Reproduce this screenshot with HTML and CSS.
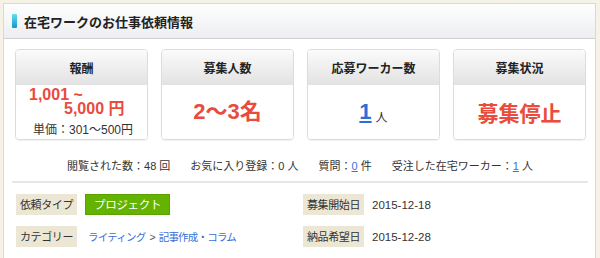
FILE: index.html
```html
<!DOCTYPE html>
<html lang="ja">
<head>
<meta charset="utf-8">
<link rel="stylesheet" href="styles.css">
</head>
<body>
<div class="panel">
  <div class="panel-header">
    <span class="bar-icon"></span>
    <h1 class="panel-title">在宅ワークのお仕事依頼情報</h1>
  </div>
  <div class="cards">
    <div class="card">
      <div class="card-head">報酬</div>
      <div class="card-body">
        <div class="reward">
          <span class="reward-l1">1,001 ~</span>
          <span class="reward-l2">5,000 円</span>
          <span class="unit">単価：301〜500円</span>
        </div>
      </div>
    </div>
    <div class="card">
      <div class="card-head">募集人数</div>
      <div class="card-body"><span class="big red">2〜3名</span></div>
    </div>
    <div class="card">
      <div class="card-head">応募ワーカー数</div>
      <div class="card-body"><a class="big blue" href="#">1</a><span class="small">人</span></div>
    </div>
    <div class="card">
      <div class="card-head">募集状況</div>
      <div class="card-body"><span class="big red status">募集停止</span></div>
    </div>
  </div>
  <div class="stats">
    <span>閲覧された数：48 回</span>
    <span>お気に入り登録：0 人</span>
    <span>質問：<a href="#">0</a> 件</span>
    <span>受注した在宅ワーカー：<a href="#">1</a> 人</span>
  </div>
  <div class="details">
    <div class="row"><span class="label">依頼タイプ</span><span class="tag">プロジェクト</span></div>
    <div class="row"><span class="label">募集開始日</span><span class="value">2015-12-18</span></div>
    <div class="row"><span class="label">カテゴリー</span><span class="cats"><a href="#">ライティング</a><span class="sep">&gt;</span><a href="#">記事作成・コラム</a></span></div>
    <div class="row"><span class="label">納品希望日</span><span class="value">2015-12-28</span></div>
  </div>
</div>
</body>
</html>
```

FILE: styles.css
```css
* { box-sizing: border-box; }
html, body { margin: 0; padding: 0; }
body {
  background: #f6f2e6;
  font-family: "Liberation Sans", "Noto Sans CJK JP", sans-serif;
  color: #333;
  width: 600px;
  height: 258px;
  overflow: hidden;
}
a { color: #3a6fd8; }
.panel {
  margin: 3px 4px 0 3px;
  border: 1px solid #d9d9d9;
  border-bottom: none;
  background: #fff;
  height: 255px;
  overflow: hidden;
}
.panel-header {
  height: 35px;
  border-bottom: 1px solid #cfcfcf;
  background: linear-gradient(#fefefe, #eceef1);
  display: flex;
  align-items: center;
  padding-left: 8px;
}
.bar-icon {
  width: 5px;
  height: 14px;
  border-radius: 1px;
  background: linear-gradient(#5fe0f0, #1596c8);
  margin-right: 7px;
}
.panel-title {
  margin: 0;
  font-family: "Noto Sans CJK JP", sans-serif;
  font-size: 13px;
  font-weight: bold;
  color: #222;
}
.cards {
  display: grid;
  grid-template-columns: repeat(4, 1fr);
  gap: 13px;
  padding: 10px 9px 0 11px;
}
.card {
  border: 1px solid #dcdcdc;
  border-radius: 4px;
  height: 91px;
  overflow: hidden;
  box-shadow: 0 1px 1px rgba(0,0,0,0.06);
  display: flex;
  flex-direction: column;
}
.card-head {
  height: 35px;
  background: linear-gradient(#fbfbfb, #e2e2e2);
  display: flex;
  align-items: center;
  justify-content: center;
  font-family: "Noto Sans CJK JP", sans-serif;
  font-size: 12px;
  font-weight: bold;
  color: #222;
}
.card-body {
  flex: 1;
  display: flex;
  align-items: center;
  justify-content: center;
  background: #fff;
}
.reward {
  display: flex;
  flex-direction: column;
  width: 100%;
}
.reward-l1, .reward-l2 {
  color: #e94b3c;
  font-weight: bold;
  font-size: 16px;
  line-height: 13px;
  white-space: nowrap;
}
.reward-l1 { padding-left: 13px; }
.reward-l2 { padding-left: 48px; margin-top: 1px; }
.unit {
  text-align: center;
  font-size: 12px;
  margin-top: 8px;
  line-height: 14px;
  color: #333;
  padding-left: 3px;
}
.big {
  font-size: 22px;
  font-weight: bold;
  line-height: 28px;
}
.red { color: #e94b3c; }
.blue { color: #2b6ed8; font-size: 22px; }
.status {
  font-family: "Noto Sans CJK JP", sans-serif;
  font-size: 21px;
}
.small {
  font-size: 12px;
  color: #333;
  margin-left: 4px;
  align-self: center;
  margin-top: 8px;
}
.stats {
  display: flex;
  justify-content: center;
  gap: 20px;
  font-size: 11px;
  line-height: 18px;
  margin: 17px 7px 0 8px;
  padding-bottom: 6px;
  border-bottom: 2px solid #e6e6e6;
  color: #333;
}
.details {
  display: grid;
  grid-template-columns: 287px 1fr;
  row-gap: 11px;
  padding: 11px 8px 0 12px;
}
.row {
  display: flex;
  align-items: center;
  height: 21px;
}
.label {
  background: #ece7d4;
  line-height: 21px;
  padding: 0 4px;
  font-size: 11px;
  letter-spacing: -0.4px;
  font-family: "Noto Sans CJK JP", sans-serif;
  color: #333;
}
.tag {
  margin-left: 8px;
  background: #64b300;
  border: 1px solid #59a200;
  color: #fff;
  font-size: 11.5px;
  line-height: 19px;
  padding: 0 8px;
  letter-spacing: -0.3px;
  font-family: "Noto Sans CJK JP", sans-serif;
}
.value {
  margin-left: 8px;
  font-size: 11.5px;
  color: #333;
}
.cats {
  margin-left: 11px;
  font-size: 10.5px;
  letter-spacing: -0.8px;
  color: #3a6fd8;
}
.cats a { text-decoration: none; }
.sep { margin: 0 4px; color: #555; }
```
